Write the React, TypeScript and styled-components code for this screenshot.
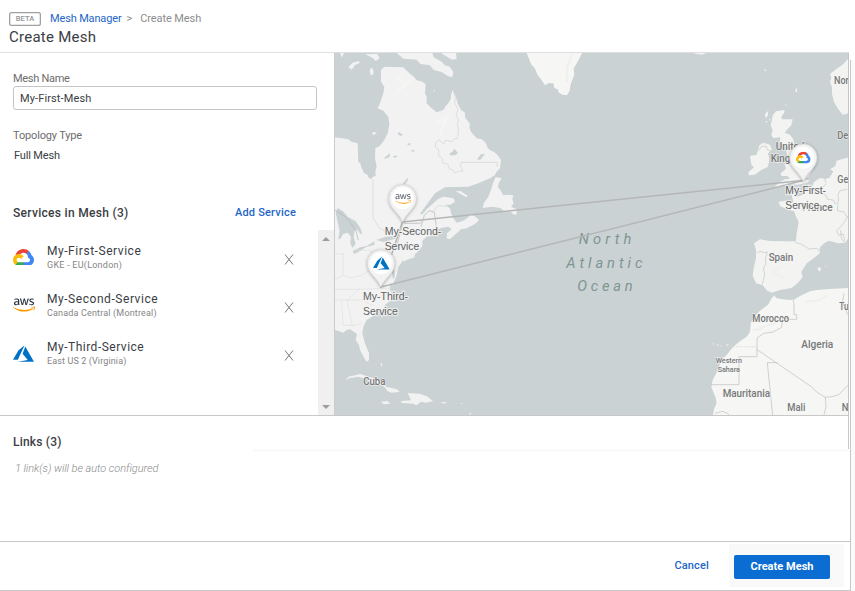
import React from "react";
import styled, { createGlobalStyle } from "styled-components";
import { FaAws } from "react-icons/fa";

const GlobalStyle = createGlobalStyle`
  body { margin: 0; background: #fff; font-family: Roboto, "Liberation Sans", sans-serif; }
  *, *::before, *::after { box-sizing: border-box; }
`;

const Page = styled.div`
  display: flex;
  width: 855px;
  height: 591px;
  overflow: hidden;
  color: #3a3d43;
`;

const Content = styled.main`
  display: flex;
  flex-direction: column;
  width: 850px;
  height: 591px;
  border-bottom: 1px solid #c8c8c8;
`;

const Rail = styled.div`
  width: 5px;
  margin-top: 60px;
  background: #fafafa;
  border-left: 1px solid #c8c8c8;
`;

const Text = styled.span<{ $size?: number; $spacing?: number; $color?: string; $weight?: number; $line?: number }>`
  font-size: ${(p) => p.$size ?? 11}px;
  line-height: ${(p) => p.$line ?? 14}px;
  letter-spacing: ${(p) => p.$spacing ?? 0}px;
  color: ${(p) => p.$color ?? "inherit"};
  font-weight: ${(p) => p.$weight ?? 400};
  white-space: nowrap;
`;

const Header = styled.header`
  width: 849px;
  height: 53px;
  flex: none;
  padding: 12px 9px 0;
  border-bottom: 1px solid #dfdfdf;
`;

const Crumbs = styled.nav`
  display: flex;
  height: 14px;
  align-items: center;
`;

const Beta = styled.span`
  width: 32px;
  height: 14px;
  margin-right: 9px;
  box-shadow: inset 0 0 0 1.3px #a0a0a0;
  border-radius: 2.5px;
  color: #959595;
  font-size: 7.5px;
  font-weight: 500;
  line-height: 14px;
  letter-spacing: 0.1px;
  text-align: center;
`;

const Arrow = styled(Text)`
  margin: 0 8px 0 5px;
`;

const Title = styled.h1`
  margin: 2px 0 0;
  font-size: 15px;
  font-weight: 400;
  line-height: 18px;
  letter-spacing: 0.25px;
`;

const Body = styled.section`
  display: flex;
  width: 849px;
  height: 363px;
  flex: none;
  border-bottom: 1px solid #c8c8c8;
`;

const Side = styled.div`
  display: flex;
  flex-direction: column;
  width: 334px;
  padding-top: 19px;
`;

const Field = styled.div`
  display: flex;
  flex-direction: column;
  padding-left: 13px;
`;

const NameInput = styled.input`
  width: 304px;
  height: 24px;
  margin: 0 0 19px;
  padding: 0 6px;
  border: 1px solid #c4c4c4;
  border-radius: 3px;
  outline: none;
  color: #3a3d43;
  font: 400 11px Roboto, sans-serif;
  letter-spacing: 0.12px;
`;

const TopologyValue = styled(Text)`
  margin: 6px 0 0 1px;
`;

const ServicesHead = styled.div`
  display: flex;
  justify-content: space-between;
  width: 296px;
  margin-top: 43px;
  padding-left: 13px;
`;

const ListArea = styled.div`
  display: flex;
  justify-content: space-between;
  flex: 1;
  margin-top: 10px;
`;

const Services = styled.ul`
  display: flex;
  flex-direction: column;
  width: 298px;
  margin: 0;
  padding: 3px 0 0 13px;
  list-style: none;
`;

const Service = styled.li`
  display: grid;
  grid-template-columns: 34px 1fr 14px;
  align-items: center;
  height: 48px;
`;

const ServiceText = styled.div`
  display: flex;
  flex-direction: column;
  padding-top: 2px;
`;

const Mark = styled.span`
  display: flex;
  align-items: center;
  height: 26px;
`;

const Scrollbar = styled.div`
  display: flex;
  flex-direction: column;
  justify-content: space-between;
  align-items: center;
  width: 16px;
  padding: 7px 0 6px;
  background: #f0f0f0;
`;

const Chevron = styled.span<{ $down?: boolean }>`
  border-left: 4px solid transparent;
  border-right: 4px solid transparent;
  ${(p) => (p.$down ? "border-top" : "border-bottom")}: 4px solid #9d9d9d;
`;

const MapFrame = styled.div`
  width: 515px;
  height: 362px;
  border-left: 1px solid #c8cccc;
  border-right: 1px solid #c5c5c5;
  overflow: hidden;
`;

const MapSvg = styled.svg`
  display: block;
  width: 514px;
  height: 362px;
  background: #cad2d3;
`;

const Links = styled.section`
  display: flex;
  flex-direction: column;
  height: 125px;
  flex: none;
`;

const LinksHead = styled.div`
  display: flex;
  width: 849px;
  height: 33px;
  padding: 19px 13px 0;
  border-right: 1px solid #c8c8c8;
`;

const Band = styled.div`
  width: 597px;
  height: 3px;
  margin-left: 253px;
  background: #fbfbfb;
`;

const LinksNote = styled(Text)`
  margin: 10px 0 0 15px;
  font-style: italic;
`;

const Footer = styled.footer`
  display: flex;
  align-items: flex-start;
  justify-content: flex-end;
  height: 49px;
  padding: 2px 6px 0 0;
  border-top: 1px solid #c8c8c8;
`;

const LinkButton = styled.button`
  margin: 15px 20px 0 0;
  padding: 0;
  border: 0;
  background: none;
  color: #1e66c8;
  font: 500 11px/14px Roboto, sans-serif;
  letter-spacing: 0.15px;
`;

const ButtonPad = styled.div`
  width: 115px;
  height: 43px;
  padding: 11px 0 0 5px;
  background: #f9f9f9;
`;

const Primary = styled.button`
  display: block;
  width: 96px;
  height: 24px;
  padding: 0 0 2px;
  border: 0;
  border-radius: 2px;
  background: #0b6cd2;
  color: #fff;
  font: 700 11px Roboto, sans-serif;
  letter-spacing: 0.03px;
`;

const Defs = styled.svg`
  width: 0;
  height: 0;
`;

const AwsGlyph = styled(FaAws)`
  path { fill: url(#awsTone); }
`;

type Kind = "gcp" | "aws" | "azure";

/* Provider artwork, drawn in a box that is `w` wide. */
const ProviderArt = ({ kind, w, x, y }: { kind: Kind; w: number; x?: number; y?: number }) => {
  if (kind === "gcp")
    return (
      <svg x={x} y={y} width={w} height={w * 0.805} viewBox="0 0 256 206">
        <path fill="#EA4335" d="M170.25 56.82L192.5 34.57l1.49-9.37C153.44-11.68 88.98-7.5 52.42 33.92 42.27 45.42 34.73 59.76 30.72 74.57l7.97-1.12 44.5-7.34 3.44-3.51c19.8-21.75 53.27-24.67 76.13-6.17z" />
        <path fill="#4285F4" d="M224.2 73.92a100.25 100.25 0 0 0-30.21-48.72l-31.23 31.23a55.5 55.5 0 0 1 20.38 44.02V106a27.8 27.8 0 0 1 0 55.29h-55.68l-5.46 5.93v33.34l5.46 5.24h55.68c39.93.3 72.55-31.5 72.86-71.43.19-24.2-11.75-46.9-31.8-60.45" />
        <path fill="#34A853" d="M71.87 205.8h55.6v-44.51h-55.6a27.6 27.6 0 0 1-11.48-2.5l-8 2.46-22.31 22.14-1.94 7.54a72.2 72.2 0 0 0 43.73 14.87" />
        <path fill="#FBBC05" d="M71.87 61.42C31.94 61.66-.24 94.23 0 134.16a72.3 72.3 0 0 0 28.22 56.88l32.24-32.24a27.8 27.8 0 1 1 36.78-36.78l32.25-32.24a72.3 72.3 0 0 0-57.62-28.36" />
      </svg>
    );
  if (kind === "azure")
    return (
      <svg x={x} y={y} width={w} height={w} viewBox="0 0 24 24">
        <path fill="#0072c6" d="M5.48 21.3H24L14.03 4.01l-3.04 8.35 5.83 6.94zM13.23 2.7L6.1 8.68 0 19.25h5.5v.02z" />
      </svg>
    );
  return <AwsGlyph x={x} y={y} size={w} />;
};

const CloseSvg = styled.svg`
  display: block;
  margin-top: 4px;
`;

const CloseIcon = () => (
  <CloseSvg width="10" height="11" viewBox="0 0 10 11" fill="none" stroke="#777" strokeWidth="1">
    <path d="M1 .5l8 10M9 .5l-8 10" />
  </CloseSvg>
);

const MapPin = ({ kind, x, y, lines }: { kind: Kind; x: number; y: number; lines: [string, number][] }) => (
  <g transform={`translate(${x} ${y})`}>
    <path d="M0 0C-12-30-41-40-41-71a41 41 0 1 1 82 0C41-40 12-30 0 0z" fill="#f3f3f3" stroke="#d2d2d2" strokeWidth="2" filter="url(#pinShadow)" />
    <circle cy="-71" r="33" fill="#fff" />
    {kind === "gcp" && <ProviderArt kind="gcp" w={44} x={-22} y={-89} />}
    {kind === "aws" && (
      <g opacity=".75">
        <ProviderArt kind="aws" w={50} x={-24} y={-94} />
      </g>
    )}
    {kind === "azure" && <ProviderArt kind="azure" w={50} x={-24} y={-97} />}
    {lines.map(([t, w], i) => (
      <text key={t} x={-54} y={39 + i * 45} textLength={w} lengthAdjust="spacingAndGlyphs" fontFamily="Liberation Sans, sans-serif" fontSize="33" fill="#606060" stroke="#f4f4f4" strokeWidth="7" strokeOpacity=".75" paintOrder="stroke">
        {t}
      </text>
    ))}
  </g>
);

type Label = [text: string, x: number, y: number, width: number, size?: number];

const places: Label[] = [
  ["Cuba", 85, 1004, 66],
  ["United", 1322, 299, 86],
  ["Kingdom", 1307, 335, 118],
  ["Nor", 1497, 103, 44],
  ["De", 1507, 267, 33],
  ["Ge", 1507, 399, 33],
  ["France", 1402, 483, 91],
  ["Spain", 1301, 633, 74],
  ["Morocco", 1252, 815, 110],
  ["Tu", 1513, 780, 28],
  ["Algeria", 1399, 893, 96],
  ["Western", 1142, 939, 79, 22],
  ["Sahara", 1148, 966, 67, 22],
  ["Mauritania", 1163, 1042, 142],
  ["Mali", 1357, 1083, 54],
  ["N", 1520, 1083, 20],
];

const ocean: Label[] = [
  ["North", 731, 581, 158],
  ["Atlantic", 694, 653, 228],
  ["Ocean", 727, 724, 166],
];

const AtlanticMap = () => (
  <MapSvg viewBox="0 9 1542 1086" preserveAspectRatio="none">
    <defs>
      <filter id="pinShadow" x="-30%" y="-30%" width="160%" height="160%">
        <feDropShadow dx="0" dy="2" stdDeviation="5" floodColor="#000" floodOpacity=".35" />
      </filter>
    </defs>
    {/* North America */}
    <g fill="#f1f2f1" strokeLinejoin="round">
      <path d="M0 262L22 265 40 268 50 275 68 280 70 335 76 340 79 352 84 362 86 368 98 375 100 382 108 388 114 380 122 378 121 362 125 350 120 325 121 295 135 287 148 270 158 250 163 225 160 200 145 182 128 175 135 160 145 130 148 110 138 95 138 60 148 50 205 52 215 62 238 82 244 90 262 95 272 103 270 130 275 140 275 160 290 175 305 187 325 180 332 168 340 160 347 148 349 130 353 120 362 138 368 160 378 180 390 188 390 202 405 222 403 232 408 245 425 265 440 268 452 278 458 294 465 300 478 306 490 318 498 330 495 355 484 366 480 375 465 385 430 400 400 410 330 412 300 430 285 450 270 470 255 492 262 493 275 478 290 464 308 448 325 440 355 445 360 455 346 464 330 464 345 475 348 490 355 505 365 518 385 512 402 500 400 492 412 496 422 500 432 510 420 522 395 535 378 538 365 550 345 568 335 565 336 550 350 538 340 530 318 534 300 545 292 556 275 560 262 572 262 588 250 604 240 612 238 622 215 630 205 636 206 628 198 640 190 650 184 680 172 704 166 700 164 720 170 724 168 750 150 765 145 778 128 784 120 795 95 810 85 830 82 850 90 880 102 910 102 930 95 936 88 925 75 900 72 885 62 870 66 852 45 838 35 840 25 848 0 840z" />
      <path d="M482 381L500 385 492 398 488 410 496 420 505 436 518 434 535 436 532 448 536 460 528 470 546 478 544 494 534 492 526 484 508 484 496 474 470 470 443 474 446 460 460 440 468 420 474 400z" />
      <path d="M185 9L205 26 245 29 256 42 285 46 296 60 320 66 338 78 352 82 355 66 344 50 330 46 318 34 296 22 292 9zM318 9h45l2 18 -14 2 -18-10zM90 13l36-2 8 14-12 8-10-10zM40 52l12-14 20-5 2 6-14 6-10 14zM104 62l5-10 7 10-2 14-7-2zM294 122l5-3-1 7zM110 251l6-6 10 4-10 6zM362 424l14-1 22 14-4 5zM15 9h12l-6 14z" />
      <path d="M32 990L40 980 66 974 76 972 100 980 115 984 140 998 154 1010 186 1018 194 1026 170 1028 158 1024 148 1010 130 1002 108 1000 96 988 70 980 45 984zM138 1055l20-2 8 8-20 2zM218 1029l36 2 22 8 18 14-20 5-16-3-14 11-8-5-36-2-2-6 30-2zM315 1056l20 1-6 4zM136 941l5-2v13zM376 1059l8 1-4 2zM402 1090l8-2-5 6z" />
      <path d="M575 9H741L734 24 722 46 716 54 718 74 708 100 703 124 696 136 682 134 672 128 668 118 658 114 655 100 640 100 630 106 618 88 608 76 600 56 588 42z" fill="#f6f6f5" />
      <path d="M710 14l-14 40 0 42" fill="none" stroke="#f0f0ef" strokeWidth="8" />
      <path d="M205 70l-20 14 20 15 32-8M190 120l36-24M300 220l36-18-22 55" fill="none" stroke="#f5f5f4" strokeWidth="9" />
    </g>
    {/* Lakes */}
    <g fill="#cad2d3">
      <path d="M2 488L8 474 24 484 38 500 62 514 76 534 82 552 74 550 66 538 58 544 56 562 62 582 52 594 46 580 48 560 38 548 24 552 16 566 10 568 14 544 8 516zM54 602L76 592 96 588 118 574 118 584 92 592 70 606 56 612zM124 570l28-10 32-3-3 9-35 10zM204 402l8-12 6-6 1 6-10 14zM147 324l18-14-1 10-12 6zM174 318l13-1-2 5-8 1zM189 246l6 2 8 6-5 4-8-4zM215 282l12-3-2 8zM228 301l12-2-6 8zM343 312l12-10 4-6 10 14-10 6-14 0zM428 325l10-12 12-1-8 10-6 7-8 0zM172 640l6 20 2 20-6 8-4-24zM78 338l8-3 7 9-9 3z" />
    </g>
    {/* Borders in North America */}
    <g fill="none" stroke="#d3d3d1" strokeWidth="2">
      <path d="M0 480l34 22 28 38 8 30M258 530l10-34 14-14 16 4 6 44 12 14M206 520h48l6-4M184 590l20-70" stroke="#b2b3b2" />
      <path d="M114 388v114l18 32 36 18M355 125l6 18-2 16 10 18-6 18 8 16-4 12 4 18-4 24-10 2-4 8-22-4-4 10-8-4-6-8-10 8-2 14 10 8 0 18 10 8 2 14 16 4 4 14 10 2 6 10 14-6 10 2-2-10-6-6 4-12h108v14M290 490l20-24 24 4" />
      <path d="M24 610v66l-24 12M24 676l22 8 34-8 26-16 14 20M0 718h70l100-4M0 750h80l34 18M56 600l52 2 12 52M74 715l-38 36 16 76 28-6M20 752l4 74h28M0 612h26" stroke="#e1e1df" />
    </g>
    {/* Europe and Africa */}
    <g transform="translate(1035 0)">
      <g fill="#f3f4f2" strokeLinejoin="round">
        <path d="M288 184L312 180 314 186 304 200 306 208 338 208 334 226 322 238 314 248 330 254 340 268 344 290 356 310 366 330 372 342 394 350 398 358 386 380 374 388 390 392 376 400 352 404 328 402 300 412 284 410 300 396 314 388 330 386 322 378 304 378 302 370 318 356 314 342 318 330 326 326 320 308 318 290 304 286 298 278 302 262 280 264 274 256 278 240 272 226 276 210 278 196z" />
        <path d="M238 286L250 278 270 284 276 300 264 310 268 328 264 350 244 360 224 374 206 376 206 366 222 352 214 344 210 318 230 314z" />
        <path d="M255 192l10-10-2 16-7 6zM252 58l7 1-3 6zM345 122l7-12-2 18zM316 164l5-2-4 7zM40 9h38l-12 5-18-3zM268 204l5 6-4 2zM256 212l8 4-6 2z" />
        <path d="M507 24L498 34 486 46 468 58 450 72 454 84 450 96 456 112 456 132 462 156 474 176 488 194 500 192 507 186z" />
        <path d="M507 322L490 326 470 332 466 348 450 358 460 364 448 384 432 386 420 384 402 396 396 410 380 420 370 434 350 440 346 426 334 430 340 456 330 460 316 452 296 455 300 468 326 480 342 484 348 500 356 516 350 550 348 574 310 574 270 573 240 568 222 580 228 600 228 625 222 650 218 676 228 700 248 706 262 722 275 728 300 720 335 714 352 700 368 682 364 666 380 640 405 622 420 608 418 595 432 580 446 572 475 580 495 578 507 562z" />
        <path d="M507 714L460 716 440 718 410 720 390 724 360 738 344 748 330 750 308 748 290 745 282 736 274 746 264 764 238 784 222 802 212 820 210 846 200 860 180 874 160 890 140 914 124 930 112 964 98 990 94 1012 106 1040 110 1058 102 1078 98 1100H507z" fill="#f6f6f5" />
        <path d="M412 655l6-4 6 6-6 8zM435 648l4 0-2 4zM97 880l6 2-4 2zM111 884l5-2-2 8zM138 884l10-3-8 8zM122 886l4 2-4 2z" />
      </g>
      <path d="M248 836l-30 4M228 838l54-18 32-20M375 755l42-4 24-14M300 650l-22 20 36 12" fill="none" stroke="#eff0ee" strokeWidth="6" />
      <g fill="none" stroke="#c3c5c4" strokeWidth="2">
        <path d="M230 608l10-4 14 4 8-2-6 20 2 16-8 12 4 18-4 20-4 12M345 577l20 6 22 14 24-2 6 10M396 412l14 20 10-6 18 10 4 12 18 2 6 12 10-8-2-20 6-12 22-4M424 432l2-18 12-12M438 400l-4-14 8-4M474 460l-2 22 20 4 10 16M506 496l-20 30-16 16 6 14 14-4 4 22M482 540l2 26 8 10M236 302l8-12 14-2 4 12 16 4" />
        <path d="M340 748l2 18v28l8 0v14h-20M330 808l-22-4-3 28-26 14-28 4-20 14v56h-54v84H93M230 898l164 112 16 16 26 16 20-2 20-6 34-34M436 1042l2 28-6 24M262 938h30M262 938l16 160M105 1090l22-6 16 6 4 6M492 730l-4 24 6 20 10 20" stroke="#bcbcbb" />
        <path d="M160 890h70" stroke="#d8d8d6" strokeDasharray="5 3" />
      </g>
    </g>
    {places.map(([t, x, y, w, size]) => (
      <text key={t} x={x} y={y} textLength={w} lengthAdjust="spacingAndGlyphs" fontFamily="Roboto, sans-serif" fontWeight="500" fontSize={size ?? 31} fill="#777978" stroke="#f5f5f5" strokeWidth="4" strokeOpacity=".7" paintOrder="stroke">
        {t}
      </text>
    ))}
    {ocean.map(([t, x, y, w]) => (
      <text key={t} x={x} y={y} textLength={w} fontFamily="Roboto, sans-serif" fontStyle="italic" fontSize="44" fill="#809593">
        {t}
      </text>
    ))}
    <path d="M202 516L1407 391 138 711z" fill="none" stroke="#b5b7b7" strokeWidth="4.5" />
    <MapPin kind="aws" x={203} y={516} lines={[["My-Second-", 170], ["Service", 104]]} />
    <MapPin kind="azure" x={138} y={711} lines={[["My-Third-", 135], ["Service", 104]]} />
    <MapPin kind="gcp" x={1405} y={394} lines={[["My-First-", 122], ["Service", 102]]} />
  </MapSvg>
);

const services: { kind: Kind; name: string; region: string; spacing: number; regionSpacing: number; iconWidth: number }[] = [
  { kind: "gcp", name: "My-First-Service", region: "GKE - EU(London)", spacing: 0.55, regionSpacing: 0.25, iconWidth: 21 },
  { kind: "aws", name: "My-Second-Service", region: "Canada Central (Montreal)", spacing: 0.55, regionSpacing: 0.17, iconWidth: 22 },
  { kind: "azure", name: "My-Third-Service", region: "East US 2 (Virginia)", spacing: 0.5, regionSpacing: 0.12, iconWidth: 21 },
];

export default function App() {
  return (
    <Page>
      <GlobalStyle />
      <Content>
        <Header>
          <Crumbs>
            <Beta>BETA</Beta>
            <Text $color="#1e66c8" $spacing={-0.15}>Mesh Manager</Text>
            <Arrow $size={11} $color="#888">&gt;</Arrow>
            <Text $color="#8c8c8c" $spacing={-0.1}>Create Mesh</Text>
          </Crumbs>
          <Title>Create Mesh</Title>
        </Header>
        <Body>
          <Side>
            <Field>
              <Text $color="#6d6d6d" $spacing={-0.3}>Mesh Name</Text>
              <NameInput defaultValue="My-First-Mesh" aria-label="Mesh Name" />
              <Text $color="#6d6d6d" $spacing={-0.15}>Topology Type</Text>
              <TopologyValue $spacing={-0.15}>Full Mesh</TopologyValue>
            </Field>
            <ServicesHead>
              <Text $size={12} $weight={500} $spacing={0.3}>Services in Mesh (3)</Text>
              <Text $weight={500} $color="#1e66c8" $spacing={0.2}>Add Service</Text>
            </ServicesHead>
            <ListArea>
              <Services>
                {services.map((s) => (
                  <Service key={s.name}>
                    <Mark><ProviderArt kind={s.kind} w={s.iconWidth} /></Mark>
                    <ServiceText>
                      <Text $size={12} $spacing={s.spacing}>{s.name}</Text>
                      <Text $size={9} $spacing={s.regionSpacing} $color="#858585" $line={14}>{s.region}</Text>
                    </ServiceText>
                    <CloseIcon />
                  </Service>
                ))}
              </Services>
              <Scrollbar>
                <Chevron />
                <Chevron $down />
              </Scrollbar>
            </ListArea>
          </Side>
          <MapFrame><AtlanticMap /></MapFrame>
        </Body>
        <Links>
          <LinksHead><Text $size={12} $weight={500} $spacing={0.2}>Links (3)</Text></LinksHead>
          <Band />
          <LinksNote $color="#8a8a8a" $weight={300} $spacing={-0.05}>1 link(s) will be auto configured</LinksNote>
        </Links>
        <Footer>
          <LinkButton>Cancel</LinkButton>
          <ButtonPad><Primary>Create Mesh</Primary></ButtonPad>
        </Footer>
      </Content>
      <Rail />
      <Defs>
        <defs>
          <linearGradient id="awsTone" gradientUnits="userSpaceOnUse" x1="0" y1="0" x2="0" y2="512">
            <stop offset="0.61" stopColor="#252f3e" />
            <stop offset="0.61" stopColor="#ff9900" />
          </linearGradient>
        </defs>
      </Defs>
    </Page>
  );
}
